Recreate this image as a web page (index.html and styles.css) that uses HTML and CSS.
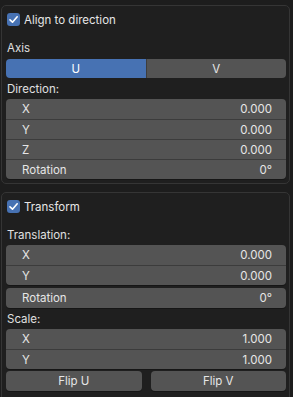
FILE: index.html
```html
<!DOCTYPE html>
<html lang="en">
<head>
  <meta charset="UTF-8" />
  <title>UV Transform</title>
  <link rel="stylesheet" href="styles.css">
</head>
<body>

<div class="panel">
  <div class="panel-head">
    <span class="check"><svg viewBox="0 0 13 13"><path d="M3 6.8 L5.5 9.2 L10.2 3.8" /></svg></span>
    <span>Align to direction</span>
  </div>

  <div class="label">Axis</div>
  <div class="toggle">
    <button class="active">U</button>
    <button>V</button>
  </div>

  <div class="label">Direction:</div>
  <div class="group">
    <div class="field"><span>X</span><span>0.000</span></div>
    <div class="field"><span>Y</span><span>0.000</span></div>
    <div class="field"><span>Z</span><span>0.000</span></div>
    <div class="field"><span>Rotation</span><span>0°</span></div>
  </div>
</div>

<div class="panel">
  <div class="panel-head">
    <span class="check"><svg viewBox="0 0 13 13"><path d="M3 6.8 L5.5 9.2 L10.2 3.8" /></svg></span>
    <span>Transform</span>
  </div>

  <div class="label">Translation:</div>
  <div class="group">
    <div class="field"><span>X</span><span>0.000</span></div>
    <div class="field"><span>Y</span><span>0.000</span></div>
  </div>
  <div class="group single">
    <div class="field"><span>Rotation</span><span>0°</span></div>
  </div>

  <div class="label">Scale:</div>
  <div class="group">
    <div class="field"><span>X</span><span>1.000</span></div>
    <div class="field"><span>Y</span><span>1.000</span></div>
  </div>
  <div class="buttons">
    <button>Flip U</button>
    <button>Flip V</button>
  </div>

  <!-- next option row, only its checkbox shows above the fold -->
  <div class="panel-head next">
    <span class="check"><svg viewBox="0 0 13 13"><path d="M3 6.8 L5.5 9.2 L10.2 3.8" /></svg></span>
  </div>
</div>

</body>
</html>
```

FILE: styles.css
```css
body {
  margin: 0;
  padding: 5px 3px 0 1px;
  background: #1d1d1d;
  font-family: Inter, "DejaVu Sans", sans-serif;
  font-size: 11.5px;
  color: #e6e6e6;
  height: 392px;
  overflow: hidden;
}

.panel {
  border: 1px solid #353535;
  border-radius: 5px;
  background: #1f1f1f;
  padding: 0 3px 4px 4px;
  margin-bottom: 8px;
}

.panel-head {
  display: flex;
  align-items: center;
  gap: 4px;
  height: 13px;
  padding: 7px 0 0 1px;
  margin-bottom: 12px;
}

.panel-head.next {
  padding-top: 0;
  margin-top: 7px;
}

.check {
  width: 13px;
  height: 13px;
  border-radius: 3px;
  background: #4772b3;
  display: flex;
}

.check svg {
  width: 13px;
  height: 13px;
  fill: none;
  stroke: #fff;
  stroke-width: 1.6;
  stroke-linecap: round;
  stroke-linejoin: round;
}

.label {
  height: 20px;
  line-height: 20px;
  padding-left: 1px;
  color: #e0e0e0;
}

.toggle {
  display: flex;
  height: 19px;
  margin: 1px 0 1px;
  border-radius: 4px;
  overflow: hidden;
}

.toggle button,
.buttons button {
  flex: 1;
  border: none;
  font: inherit;
  color: #e6e6e6;
  background: #545454;
  padding: 0;
}

.toggle button.active {
  background: #4772b3;
  color: #fff;
}

.toggle button + button {
  border-left: 1px solid #3d3d3d;
}

.group {
  border-radius: 4px;
  overflow: hidden;
  background: #545454;
  box-shadow: 0 1px 0 #161616;
}

.group.single {
  margin-top: 3px;
}

.group.single + .label {
  margin-top: 1px;
}

.field {
  display: flex;
  justify-content: space-between;
  align-items: center;
  height: 20px;
  padding: 0 14px 0 16px;
}

.field + .field {
  border-top: 1px solid #3c3c3c;
  height: 19px;
}

.buttons {
  display: flex;
  gap: 9px;
  margin-top: 2px;
}

.buttons button {
  height: 20px;
  border-radius: 4px;
  box-shadow: 0 1px 0 #161616;
}
```
